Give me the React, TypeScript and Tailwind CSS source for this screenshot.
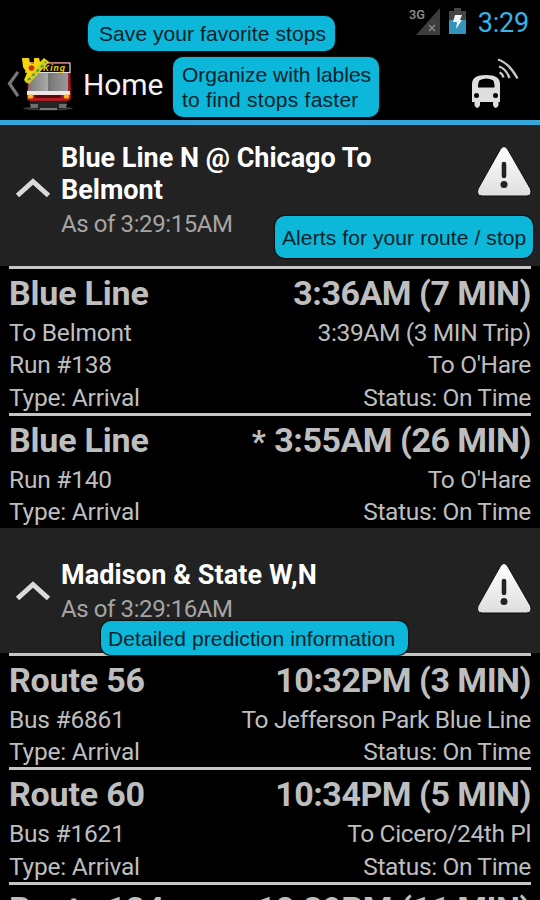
import React from "react";

type Prediction = {
  route: string;
  time: string;
  starred?: boolean;
  details: [string, string][];
};

const blueLine: Prediction[] = [
  {
    route: "Blue Line",
    time: "3:36AM (7 MIN)",
    details: [
      ["To Belmont", "3:39AM (3 MIN Trip)"],
      ["Run #138", "To O'Hare"],
      ["Type: Arrival", "Status: On Time"],
    ],
  },
  {
    route: "Blue Line",
    time: "3:55AM (26 MIN)",
    starred: true,
    details: [
      ["Run #140", "To O'Hare"],
      ["Type: Arrival", "Status: On Time"],
    ],
  },
];

const madison: Prediction[] = [
  {
    route: "Route 56",
    time: "10:32PM (3 MIN)",
    details: [
      ["Bus #6861", "To Jefferson Park Blue Line"],
      ["Type: Arrival", "Status: On Time"],
    ],
  },
  {
    route: "Route 60",
    time: "10:34PM (5 MIN)",
    details: [
      ["Bus #1621", "To Cicero/24th Pl"],
      ["Type: Arrival", "Status: On Time"],
    ],
  },
  {
    route: "Route 124",
    time: "10:39PM (11 MIN)",
    details: [],
  },
];

function StatusBar() {
  return (
    <div className="flex h-11 items-start justify-end pr-[11px]">
      <svg width="34" height="30" viewBox="0 0 34 30" className="mt-[6px]">
        <path d="M32 2V29H8Z" fill="#3c3c3c" />
        <text x="1" y="13" fill="#909090" fontSize="13.5" fontWeight="500" fontFamily="Roboto, sans-serif" textLength="16" lengthAdjust="spacingAndGlyphs">
          3G
        </text>
        <path d="M21 19l6 6m0-6l-6 6" stroke="#858585" strokeWidth="1.5" />
      </svg>
      <svg width="20" height="28" viewBox="0 0 20 28" className="mt-[7px] ml-[6px]">
        <path d="M6 1h7v3h5v10H1V4h5z" fill="#454545" />
        <path d="M1 13h17v14H1z" fill="#3493bb" />
        <path d="M7 8h7l-2 5h2l-6 9 1-7H5z" fill="#eef5f8" />
      </svg>
      <span className="mt-[7px] ml-[10px] text-[27px] leading-8 tracking-[-0.2px] text-[#33b5e5]">3:29</span>
    </div>
  );
}

function AppIcon() {
  return (
    <svg width="54" height="56" viewBox="0 0 54 56">
      <defs>
        <linearGradient id="glass" x1="0" x2="1" y1="0" y2="0">
          <stop offset="0" stopColor="#7a7a7a" />
          <stop offset="0.5" stopColor="#a9a9a9" />
          <stop offset="0.52" stopColor="#777" />
          <stop offset="1" stopColor="#999" />
        </linearGradient>
      </defs>
      <ellipse cx="26" cy="51.500" rx="25" ry="2" fill="#383838" />
      <path d="M8 43h37v5l-5 4H12l-4-4z" fill="#242424" />
      <path d="M8 47h8v4H9zM37 47h8l-1 4h-7z" fill="#6d6d6d" />
      <path d="M18 51h17v2H18z" fill="#777" />
      <path d="M7 5h41l1 35q0 4-4 4H9q-4 0-4-4z" fill="#a51a1e" />
      <path d="M7 6h41v9.500H7z" fill="#080808" stroke="#ddd" strokeWidth="1.200" />
      <path d="M8 16h38v19H6z" fill="url(#glass)" />
      <path d="M27 16v19" stroke="#666" />
      <path d="M5 34h43v4H5z" fill="#ece6e6" />
      <path d="M5 38h43v5H5z" fill="#b51c20" />
      <path d="M13 38h26v3H13z" fill="#570b0d" />
      <rect x="6" y="37.500" width="5" height="4" rx="1" fill="#ffb51c" />
      <rect x="42" y="37.500" width="5" height="4" rx="1" fill="#ffb51c" />
      <text x="21" y="13.500" fill="#f0d20a" fontSize="8.500" fontStyle="italic" fontWeight="700" fontFamily="Liberation Sans, sans-serif" textLength="22">
        King
      </text>
      <path d="M0 1l7 0 1 5 4 1 0-6 5 0 1 4 4-4 5 4-23 20-2-2 3-7-4-6z" fill="#f3d60e" />
      <path d="M3 25L22 2l5 3L7 27z" fill="#d9cb1c" />
      <path d="M6 23L24 5" stroke="#33904c" strokeWidth="1.600" strokeDasharray="3 3" />
      <path d="M8 23L25 6" stroke="#e1442a" strokeWidth="1" strokeDasharray="1 5" />
      <circle cx="9.500" cy="11" r="2.800" fill="#da2916" />
      <circle cx="4" cy="15" r="1" fill="#f3d60e" />
    </svg>
  );
}

function BusIcon() {
  return (
    <svg width="48" height="50" viewBox="0 0 48 50">
      <path
        fillRule="evenodd"
        fill="#dedede"
        d="M1 26q0-9 14-9t14 9v18h-1.500v3q-.8 3-2.800 3t-2.700-3v-3H9v3q-.8 3-2.800 3T3.500 47v-3H1zM9 22q-2 1-2 7.500h16.500q0-6.500-2-7.500-6-3-12.500 0z"
      />
      <circle cx="5.500" cy="37.500" r="2.500" fill="#000" />
      <circle cx="24.500" cy="37.500" r="2.500" fill="#000" />
      <g fill="none" stroke="#c9c9c9" strokeWidth="2.300">
        <path d="M27 1.500Q38 5 46.500 20.500" />
        <path d="M28 8.500q7 2 10.500 11.500" />
        <path d="M28.500 14.500q3 1 4 5" />
      </g>
    </svg>
  );
}

function AlertIcon() {
  return (
    <svg width="56" height="51" viewBox="0 0 56 51" className="shrink-0">
      <defs>
        <linearGradient id="alert" x1="0" x2="0" y1="0" y2="1">
          <stop offset="0" stopColor="#fff" />
          <stop offset="1" stopColor="#dedede" />
        </linearGradient>
      </defs>
      <path
        d="M24.500 3q3.500-5 7 0L54.500 43q2 6.500-4 7H6Q0 49.500 2 43z"
        fill="url(#alert)"
        stroke="#0d0d0d"
        strokeWidth="1"
      />
      <path d="M28 18v12" stroke="#222" strokeWidth="4.600" strokeLinecap="round" />
      <circle cx="28" cy="38.500" r="3.500" fill="#222" />
    </svg>
  );
}

function Chevron() {
  return (
    <svg width="36" height="22" viewBox="0 0 36 22" className="shrink-0">
      <path d="M2.500 18.500L18 4.500l15.500 14" fill="none" stroke="#dadada" strokeWidth="5" />
    </svg>
  );
}

function Callout({ className, children }: { className: string; children: React.ReactNode }) {
  return (
    <div
      className={`absolute z-10 whitespace-nowrap rounded-[10px] bg-[#0cb7d9] font-['Liberation_Sans',Arial,sans-serif] text-[#06232b] shadow-[0_0_1px_1px_#111] ${className}`}
    >
      {children}
    </div>
  );
}

function PredictionRow({ item }: { item: Prediction }) {
  return (
    <div className="px-[9px]">
      <div className="h-[3px] bg-[#c5c5c5]" />
      <div className="flex h-[46.8px] justify-between text-[34px] leading-[48px] font-bold">
        <span className="tracking-[-0.2px]">{item.route}</span>
        <span className="tracking-[-0.5px]">
          {item.starred && <span className="mr-[9px] text-[31px]">*</span>}
          {item.time}
        </span>
      </div>
      {item.details.map(([left, right]) => (
        <div key={left} className="flex h-[32.4px] justify-between text-[24.5px] leading-[33px]">
          <span className="tracking-[-0.22px]">{left}</span>
          <span className="tracking-[-0.36px]">{right}</span>
        </div>
      ))}
    </div>
  );
}

export default function App() {
  return (
    <div className="relative h-[900px] w-[540px] overflow-hidden bg-black font-[Roboto,sans-serif] text-[#bebebe]">
      <StatusBar />

      <header className="flex h-[76px] items-start">
        <svg width="12" height="28" viewBox="0 0 12 28" className="mt-[26px] ml-[7px]">
          <path d="M11 2L2.500 13.500 11 26" fill="none" stroke="#777" strokeWidth="3.200" />
        </svg>
        <div className="mt-[13px] ml-[3px]">
          <AppIcon />
        </div>
        <h1 className="mt-[23px] ml-[7px] text-[30px] leading-9 tracking-[-0.1px] text-[#f2f2f2]">Home</h1>
        <div className="mt-[14px] mr-[21px] ml-auto">
          <BusIcon />
        </div>
      </header>
      <div className="h-[5px] bg-[#35a8db]" />

      <section>
        <div className="flex h-[141px] bg-[#222]">
          <div className="mt-[52px] ml-[15px]">
            <Chevron />
          </div>
          <div className="mt-[17px] ml-[10px] w-[360px]">
            <h2 className="text-[27px] leading-8 font-bold text-white">
              Blue Line N @ Chicago To
              <br />
              Belmont
            </h2>
            <p className="mt-[2px] text-[24px] leading-8 tracking-[-0.4px] text-[#a5a5a5]">As of 3:29:15AM</p>
          </div>
          <div className="mt-[21px] ml-auto pr-[8px]">
            <AlertIcon />
          </div>
        </div>
        {blueLine.map((item) => (
          <PredictionRow key={item.time} item={item} />
        ))}
      </section>

      <section>
        <div className="flex h-[125.2px] bg-[#222]">
          <div className="mt-[52px] ml-[15px]">
            <Chevron />
          </div>
          <div className="mt-[31px] ml-[10px] w-[360px]">
            <h2 className="text-[27px] leading-8 font-bold tracking-[0.1px] text-white">Madison &amp; State W,N</h2>
            <p className="mt-[2px] text-[24px] leading-8 tracking-[-0.4px] text-[#a5a5a5]">As of 3:29:16AM</p>
          </div>
          <div className="mt-[35px] ml-auto pr-[8px]">
            <AlertIcon />
          </div>
        </div>
        {madison.map((item) => (
          <PredictionRow key={item.time} item={item} />
        ))}
      </section>

      {/* feature callouts over the screen */}
      <Callout className="top-[16px] left-[88px] h-[35px] w-[247px] pl-[11px] text-[21px] leading-[35px] tracking-[0.07px]">
        Save your favorite stops
      </Callout>
      <Callout className="top-[57px] left-[173px] h-[60px] w-[206px] pt-[5px] pl-[9px] text-[21px] leading-[25px]">
        Organize with lables
        <br />
        <span className="tracking-[0.25px]">to find stops faster</span>
      </Callout>
      <Callout className="top-[216px] left-[275px] h-[42px] w-[258px] pl-[7px] text-[21px] leading-[43px] tracking-[0.1px]">
        Alerts for your route / stop
      </Callout>
      <Callout className="top-[621px] left-[101px] h-[34px] w-[307px] pl-[7px] text-[21px] leading-[35px] tracking-[0.12px]">
        Detailed prediction information
      </Callout>
    </div>
  );
}
